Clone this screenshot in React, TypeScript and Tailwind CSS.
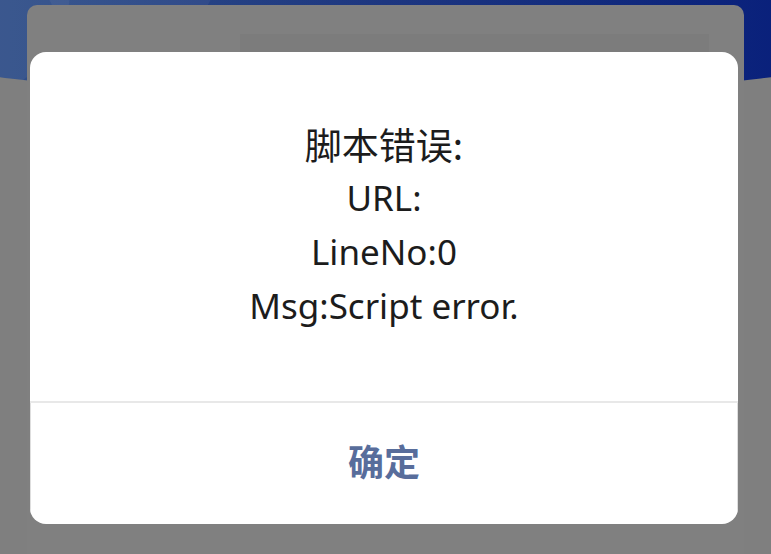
import React from "react";

const latin = '"Noto Sans", "AR PL UKai CN", "AR PL UKai", KaiTi, STKaiti, "Noto Sans CJK SC", sans-serif';
const kai = '"AR PL UKai CN", "AR PL UKai", KaiTi, STKaiti, "Noto Sans CJK SC", sans-serif';

export default function App() {
  return (
    <div className="relative w-[771px] h-[554px] overflow-hidden bg-[#7f7f7f]" style={{ fontFamily: latin }}>
      {/* background page (dimmed) */}
      <div className="flex flex-col h-full">
        <div className="h-[96px] -mx-[100px] rounded-b-[50%] bg-gradient-to-r from-[#36558a] via-[#1d3680] to-[#061a7a] overflow-hidden">
          <svg width="971" height="96" viewBox="0 0 971 96">
            <circle cx="60" cy="-10" r="110" fill="#ffffff" fillOpacity="0.05" />
            <circle cx="230" cy="-40" r="90" fill="#ffffff" fillOpacity="0.05" />
          </svg>
        </div>
        <div className="-mt-[91px] mx-[27px] flex-1 rounded-t-[10px] bg-[#808080] pt-[29px] pl-[213px] pr-[35px]">
          <div className="h-[40px] bg-[#7c7c7c]" />
        </div>
      </div>

      {/* modal dialog */}
      <div className="absolute left-[30px] top-[52px] w-[708px] h-[472px] rounded-[16px] bg-white flex flex-col overflow-hidden">
        <div className="h-[349px] flex flex-col items-center pt-[65px] text-[35px] leading-[54px] text-[#1c1c1c]">
          <div className="text-[37px]" style={{ fontFamily: kai }}>脚本错误:</div>
          <div>URL:</div>
          <div>LineNo:0</div>
          <div>Msg:Script error.</div>
        </div>
        <div className="h-[2px] bg-[#e8e8e8]" />
        <button
          className="flex-1 flex items-center justify-center pb-[8px] border-x border-[#dedede] text-[36px] font-bold text-[#586d9b]"
          style={{ fontFamily: kai }}
        >
          确定
        </button>
      </div>
    </div>
  );
}
